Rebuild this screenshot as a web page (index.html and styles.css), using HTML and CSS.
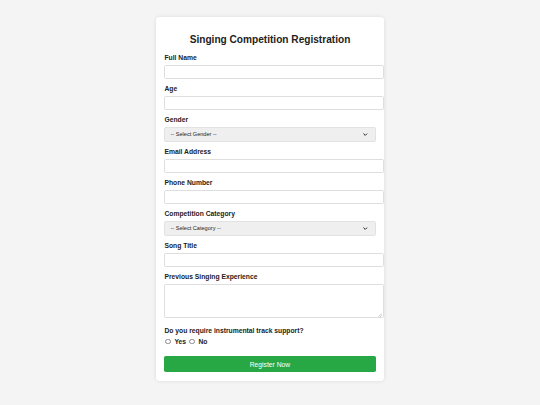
FILE: index.html
```html
<!DOCTYPE html>
<html lang="en">
<head>
<meta charset="UTF-8">
<title>Singing Competition Registration</title>
<link rel="stylesheet" href="styles.css">
</head>
<body>
<div class="card">
  <h2 class="title">Singing Competition Registration</h2>
  <form class="form">
    <label class="label" for="name">Full Name</label>
    <input class="field" type="text" id="name">

    <label class="label" for="age">Age</label>
    <input class="field" type="number" id="age">

    <label class="label" for="gender">Gender</label>
    <div class="select-wrap">
      <select class="select" id="gender">
        <option>-- Select Gender --</option>
      </select>
      <svg class="chev" viewBox="0 0 10 6" width="4.5" height="3"><path d="M1 1 L5 5 L9 1" fill="none" stroke="#222" stroke-width="2.2"/></svg>
    </div>

    <label class="label" for="email">Email Address</label>
    <input class="field" type="email" id="email">

    <label class="label" for="phone">Phone Number</label>
    <input class="field" type="tel" id="phone">

    <label class="label" for="cat">Competition Category</label>
    <div class="select-wrap">
      <select class="select" id="cat">
        <option>-- Select Category --</option>
      </select>
      <svg class="chev" viewBox="0 0 10 6" width="4.5" height="3"><path d="M1 1 L5 5 L9 1" fill="none" stroke="#222" stroke-width="2.2"/></svg>
    </div>

    <label class="label" for="song">Song Title</label>
    <input class="field" type="text" id="song">

    <label class="label" for="exp">Previous Singing Experience</label>
    <div class="area-wrap">
      <textarea class="area" id="exp"></textarea>
      <svg class="grip" viewBox="0 0 4 4" width="4" height="4"><path d="M0.5 3.8 L3.8 0.5 M2.2 3.8 L3.8 2.2" stroke="#a0a0a0" stroke-width="0.6" fill="none"/></svg>
    </div>

    <label class="label">Do you require instrumental track support?</label>
    <div class="radios">
      <label class="opt"><input class="radio" type="radio" name="track"><span>Yes</span></label>
      <label class="opt"><input class="radio" type="radio" name="track"><span>No</span></label>
    </div>

    <button class="btn" type="button">Register Now</button>
  </form>
</div>
</body>
</html>
```
FILE: styles.css
```css
html, body {
  margin: 0;
  padding: 0;
}
body {
  background: #f4f4f4;
  font-family: "Liberation Sans", Arial, sans-serif;
  font-size: 6.75px;
  color: #222;
  padding-top: 17px;
  height: 405px;
  box-sizing: border-box;
}
.card {
  width: 211.2px;
  margin: 0 auto;
  padding: 8.44px;
  background: #fff;
  border-radius: 3.4px;
  box-shadow: 0 0 4px rgba(0, 0, 0, 0.1);
}
.title {
  font-size: 10.125px;
  line-height: 11.64px;
  margin: 8.44px 0;
  text-align: center;
  color: #222;
}
.form {
  display: flex;
  flex-direction: column;
  align-items: flex-start;
}
.label {
  display: block;
  font-weight: bold;
  line-height: 7.76px;
  margin-bottom: 3.3px;
}
.field {
  width: 100%;
  height: 5.3px;
  padding: 3.2px 3px;
  border: 1px solid #dedede;
  border-radius: 1.7px;
  margin: 0 0 6.2px 0;
  font-size: 5.6px;
  font-family: inherit;
  background: #fff;
  outline: none;
  -moz-appearance: textfield;
}
.field::-webkit-inner-spin-button,
.field::-webkit-outer-spin-button {
  -webkit-appearance: none;
  margin: 0;
}
.select-wrap {
  position: relative;
  width: 100%;
  margin-bottom: 6.2px;
}
.select {
  display: block;
  width: 100%;
  height: 15px;
  box-sizing: border-box;
  appearance: none;
  -webkit-appearance: none;
  background: #efefef;
  border: 1px solid #e2e2e2;
  border-radius: 1.7px;
  padding: 0 0 0 5px;
  font-family: inherit;
  font-size: 5.6px;
  color: #222;
}
.chev {
  position: absolute;
  right: 7.8px;
  top: 6.2px;
}
.area-wrap {
  position: relative;
  width: 100%;
  margin-bottom: 8.5px;
}
.area {
  display: block;
  width: 100%;
  height: 25.7px;
  padding: 3.2px 3px;
  border: 1px solid #dedede;
  border-radius: 1.7px;
  margin: 0;
  font-family: inherit;
  font-size: 5.6px;
  resize: none;
  outline: none;
}
.grip {
  position: absolute;
  right: -6.5px;
  bottom: 1.5px;
}
.radios {
  display: flex;
  align-items: center;
  height: 7.76px;
  margin-bottom: 10.6px;
  font-weight: bold;
}
.opt {
  display: inline-flex;
  align-items: center;
  margin-right: 2.4px;
}
.radio {
  appearance: none;
  -webkit-appearance: none;
  width: 5.6px;
  height: 5.6px;
  margin: 0 3.8px 0 0.6px;
  border: 0.8px solid #8a8a8a;
  border-radius: 50%;
  box-sizing: border-box;
  background: #fff;
}
.btn {
  width: 100%;
  height: 16px;
  background: #28a745;
  color: #fff;
  border: none;
  border-radius: 1.7px;
  font-family: inherit;
  font-size: 6.75px;
  padding: 0;
}
```
